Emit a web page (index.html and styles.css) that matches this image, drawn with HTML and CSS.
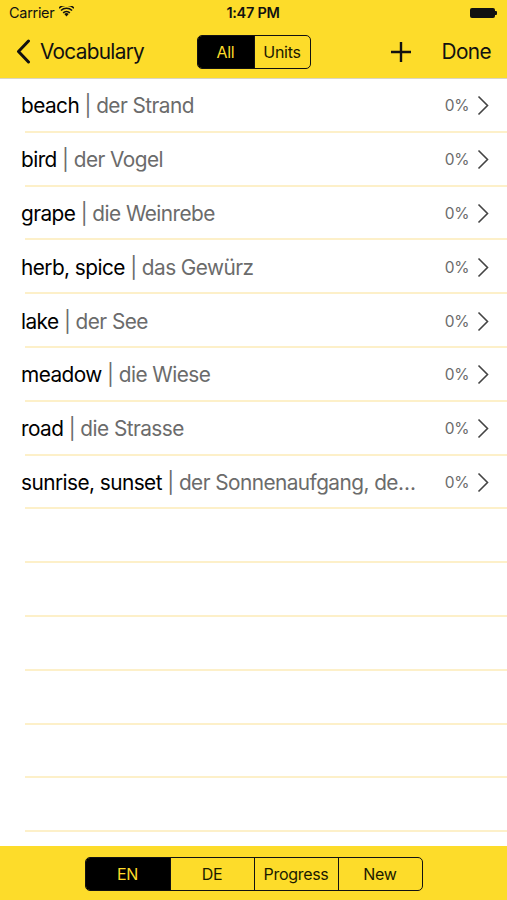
FILE: index.html
```html
<!DOCTYPE html>
<html lang="en">
  <head>
    <meta charset="UTF-8" />
    <meta name="viewport" content="width=device-width, initial-scale=1.0" />
    <title>Vocabulary</title>
    <link rel="stylesheet" href="styles.css">
  </head>
  <body>
    <div id="app">
      <header class="top">
        <div class="status-bar">
          <div class="carrier">
            Carrier
            <svg class="wifi" width="15" height="11" viewBox="0 0 15 11">
              <path d="M7.5 10.6 L5.3 8.1 A3.2 3.2 0 0 1 9.7 8.1 Z" fill="#111" />
              <path d="M3.6 6.3 A5.6 5.6 0 0 1 11.4 6.3 L10.3 7.5 A4 4 0 0 0 4.7 7.5 Z" fill="#111" />
              <path d="M1.4 3.9 A8.8 8.8 0 0 1 13.6 3.9 L12.5 5.1 A7.2 7.2 0 0 0 2.5 5.1 Z" fill="#111" />
              <path d="M-0.6 1.7 A11.6 11.6 0 0 1 15.6 1.7 L14.5 2.8 A10 10 0 0 0 0.5 2.8 Z" fill="#111" />
            </svg>
          </div>
          <div class="time">1:47 PM</div>
          <div class="battery">
            <span class="battery-body"></span><span class="battery-nub"></span>
          </div>
        </div>
        <nav class="nav-bar">
          <a class="back" href="#">
            <svg width="15" height="25" viewBox="0 0 15 25">
              <path d="M12.5 2 L2.5 12.5 L12.5 23" fill="none" stroke="#111" stroke-width="3" stroke-linecap="round" stroke-linejoin="round" />
            </svg>
            Vocabulary
          </a>
          <div class="segmented nav-seg">
            <button class="active">All</button>
            <button>Units</button>
          </div>
          <div class="nav-right">
            <svg class="plus" width="22" height="22" viewBox="0 0 22 22">
              <path d="M11 1 V21 M1 11 H21" stroke="#111" stroke-width="2.4" />
            </svg>
            <a class="done" href="#">Done</a>
          </div>
        </nav>
      </header>

      <ul class="word-list">
        <li class="row">
          <span class="word"><b>beach</b> | der Strand</span>
          <span class="score">0%</span>
          <svg class="chev" width="12" height="21" viewBox="0 0 12 21"><path d="M1.5 1.5 L10.5 10.5 L1.5 19.5" /></svg>
        </li>
        <li class="row">
          <span class="word"><b>bird</b> | der Vogel</span>
          <span class="score">0%</span>
          <svg class="chev" width="12" height="21" viewBox="0 0 12 21"><path d="M1.5 1.5 L10.5 10.5 L1.5 19.5" /></svg>
        </li>
        <li class="row">
          <span class="word"><b>grape</b> | die Weinrebe</span>
          <span class="score">0%</span>
          <svg class="chev" width="12" height="21" viewBox="0 0 12 21"><path d="M1.5 1.5 L10.5 10.5 L1.5 19.5" /></svg>
        </li>
        <li class="row">
          <span class="word"><b>herb, spice</b> | das Gewürz</span>
          <span class="score">0%</span>
          <svg class="chev" width="12" height="21" viewBox="0 0 12 21"><path d="M1.5 1.5 L10.5 10.5 L1.5 19.5" /></svg>
        </li>
        <li class="row">
          <span class="word"><b>lake</b> | der See</span>
          <span class="score">0%</span>
          <svg class="chev" width="12" height="21" viewBox="0 0 12 21"><path d="M1.5 1.5 L10.5 10.5 L1.5 19.5" /></svg>
        </li>
        <li class="row">
          <span class="word"><b>meadow</b> | die Wiese</span>
          <span class="score">0%</span>
          <svg class="chev" width="12" height="21" viewBox="0 0 12 21"><path d="M1.5 1.5 L10.5 10.5 L1.5 19.5" /></svg>
        </li>
        <li class="row">
          <span class="word"><b>road</b> | die Strasse</span>
          <span class="score">0%</span>
          <svg class="chev" width="12" height="21" viewBox="0 0 12 21"><path d="M1.5 1.5 L10.5 10.5 L1.5 19.5" /></svg>
        </li>
        <li class="row">
          <span class="word"><b>sunrise, sunset</b> | der Sonnenaufgang, der Sonnenuntergang</span>
          <span class="score">0%</span>
          <svg class="chev" width="12" height="21" viewBox="0 0 12 21"><path d="M1.5 1.5 L10.5 10.5 L1.5 19.5" /></svg>
        </li>
        <li class="row empty"></li>
        <li class="row empty"></li>
        <li class="row empty"></li>
        <li class="row empty"></li>
        <li class="row empty"></li>
        <li class="row empty"></li>
      </ul>

      <footer class="toolbar">
        <div class="segmented tool-seg">
          <button class="active">EN</button>
          <button>DE</button>
          <button>Progress</button>
          <button>New</button>
        </div>
      </footer>
    </div>
  </body>
</html>
```

FILE: styles.css
```css
* {
  box-sizing: border-box;
}

body {
  margin: 0;
  background-color: #fff;
  font-family: 'Inter', 'Liberation Sans', sans-serif;
  color: #111;
}

#app {
  width: 507px;
  height: 900px;
  display: flex;
  flex-direction: column;
  overflow: hidden;
}

.top {
  background-color: #fddc2a;
  border-bottom: 1px solid #d9d5c4;
}

.status-bar {
  height: 25px;
  padding: 0 10px 0 9px;
  display: grid;
  grid-template-columns: 1fr auto 1fr;
  align-items: center;
  font-size: 14.5px;
}

.carrier {
  display: flex;
  align-items: center;
  gap: 5px;
  letter-spacing: -0.3px;
}

.wifi {
  margin-top: -2px;
}

.time {
  font-weight: 600;
  letter-spacing: -0.3px;
}

.battery {
  justify-self: end;
  display: flex;
  align-items: center;
}

.battery-body {
  width: 25px;
  height: 10px;
  background-color: #111;
  border-radius: 2px;
}

.battery-nub {
  width: 2px;
  height: 4px;
  background-color: #111;
  border-radius: 0 1px 1px 0;
}

.nav-bar {
  height: 53px;
  display: grid;
  grid-template-columns: 1fr auto 1fr;
  align-items: center;
  padding: 0 16px 0 16px;
}

.nav-bar a {
  color: #111;
  text-decoration: none;
}

.back {
  display: flex;
  align-items: center;
  gap: 9px;
  font-size: 20.8px;
  letter-spacing: -0.7px;
}

.nav-right {
  justify-self: end;
  display: flex;
  align-items: center;
  gap: 30px;
}

.done {
  font-size: 20.8px;
  letter-spacing: -0.6px;
}

.segmented {
  display: flex;
  border: 1.5px solid #111;
  border-radius: 5px;
  overflow: hidden;
}

.segmented button {
  font-family: inherit;
  font-size: 16px;
  color: #1a1a00;
  background: transparent;
  border: none;
  border-left: 1.5px solid #111;
  padding: 0;
  height: 32px;
  letter-spacing: -0.3px;
}

.segmented button:first-child {
  border-left: none;
}

.segmented button.active {
  background-color: #000;
  color: #fddc2a;
}

.nav-seg {
  margin-top: 1px;
}

.nav-seg button {
  width: 56px;
}

.word-list {
  flex: 1;
  list-style: none;
  margin: 0;
  padding: 0;
}

.row {
  height: 53.8px;
  display: flex;
  align-items: center;
  padding: 0 18px 0 21px;
  position: relative;
  font-size: 20.8px;
}

.row::after {
  content: '';
  position: absolute;
  left: 25px;
  right: 0;
  bottom: 0;
  height: 2px;
  background-color: #fdf0c9;
}

.word {
  flex: 1;
  min-width: 0;
  white-space: nowrap;
  overflow: hidden;
  text-overflow: ellipsis;
  color: #6b6b6b;
  letter-spacing: -0.55px;
}

.word b {
  font-weight: normal;
  color: #000;
}

.score {
  margin-left: 22px;
  font-size: 15.5px;
  color: #6b6b6b;
  letter-spacing: -0.4px;
}

.chev {
  margin-left: 8px;
}

.chev path {
  fill: none;
  stroke: #444;
  stroke-width: 1.6;
}

.toolbar {
  height: 54px;
  flex-shrink: 0;
  background-color: #fddc2a;
  display: flex;
  justify-content: center;
  align-items: center;
  padding-top: 1px;
}

.tool-seg button {
  width: 84px;
}
```
